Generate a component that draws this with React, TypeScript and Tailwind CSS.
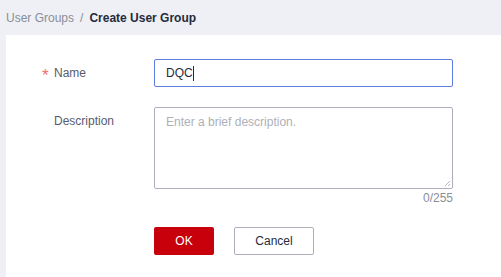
export default function App() {
  const font = { fontFamily: '"Liberation Sans", Arial, sans-serif' };
  return (
    <div className="w-[501px] h-[277px] bg-[#eef0f5] flex flex-col overflow-hidden" style={font}>
      {/* Breadcrumb */}
      <div className="h-[35px] px-[6px] flex items-center text-[12px] shrink-0">
        <span className="text-[#8a8e99]">User Groups</span>
        <span className="text-[#8a8e99] mx-[6px]">/</span>
        <span className="text-[#252b3a] font-bold">Create User Group</span>
      </div>

      {/* Card */}
      <div className="ml-[6px] flex-1 bg-white pt-[24px]">
        {/* Name */}
        <div className="flex items-center">
          <div className="w-[148px] pl-[36px] flex items-center text-[12px] text-[#575d6c]">
            <span className="w-[12px] text-[#f66f6a] text-[17px] leading-none relative top-[2px]">*</span>
            <span>Name</span>
          </div>
          <div className="w-[299px] h-[28px] border border-[#5e7ce0] rounded-[2px] flex items-center pl-[11px] text-[12px] text-[#252b3a]">
            DQC<span className="w-px h-[15px] bg-[#252b3a]" />
          </div>
        </div>

        {/* Description */}
        <div className="flex mt-[20px]">
          <div className="w-[148px] pl-[48px] pt-[5px] text-[12px] text-[#575d6c]">Description</div>
          <div className="w-[299px] flex flex-col">
            <div className="relative h-[82px] border border-[#adb0b8] rounded-[2px] pl-[11px] pt-[5px] text-[12px] text-[#adb0b8]">
              Enter a brief description.
              <svg className="absolute right-[2px] bottom-[2px]" width="6" height="6" viewBox="0 0 6 6">
                <path d="M1 6 L6 1 M4 6 L6 4" stroke="#b5b8bf" strokeWidth="1" />
              </svg>
            </div>
            <div className="h-[17px] flex items-center justify-end text-[12px] text-[#8a8e99]">0/255</div>
          </div>
        </div>

        {/* Buttons */}
        <div className="flex gap-[20px] pl-[148px] mt-[21px]">
          <button className="w-[60px] h-[28px] bg-[#c7000b] text-white text-[12px] rounded-[2px]">OK</button>
          <button className="w-[80px] h-[28px] border border-[#adb0b8] text-[#252b3a] text-[12px] rounded-[2px] bg-white">
            Cancel
          </button>
        </div>
      </div>
    </div>
  );
}
